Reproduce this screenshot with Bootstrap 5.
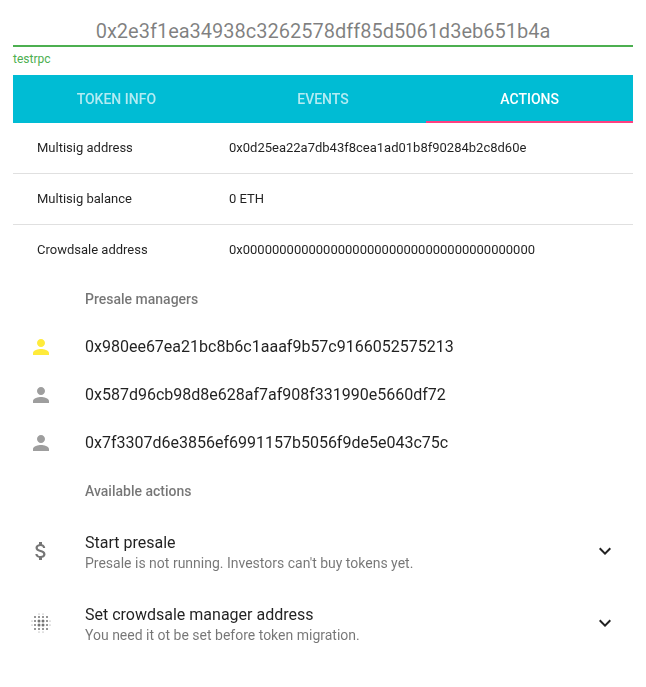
<!DOCTYPE html>
<html lang="en">
<head>
<meta charset="utf-8">
<meta name="viewport" content="width=device-width, initial-scale=1">
<title>Token contract</title>
<link href="https://cdn.jsdelivr.net/npm/bootstrap@5.3.0/dist/css/bootstrap.min.css" rel="stylesheet">
<style>
body{font-family:Roboto,"Liberation Sans",sans-serif;color:rgba(0,0,0,.87);font-size:16px;line-height:16px;-webkit-font-smoothing:antialiased}
.page{padding:13px 13px 0}
.address-input{height:34px;border:0;border-bottom:2px solid #4caf50;font-size:20px;line-height:24px;color:rgba(0,0,0,.5);padding:4px 0 0;background:transparent;border-radius:0}
.address-input:focus{box-shadow:none;border-color:#4caf50}
.network{font-size:12px;line-height:12px;color:#4caf50;margin-top:6px;height:22px}
.panel{will-change:transform}
.tabs{background:#00bcd4;height:48px}
.tabs .nav-link{height:48px;border-radius:0;font-size:14px;font-weight:500;line-height:48px;padding:0;color:rgba(255,255,255,.7)}
.tabs .nav-link.active{color:#fff;box-shadow:inset 0 -2px #ff4081}
.detail{font-size:13px;height:51px;border-bottom:1px solid #e0e0e0;padding:0 24px}
.detail:last-child{border-bottom:0;height:50px}
.detail-name{width:192px}
.subheader{font-size:14px;font-weight:500;line-height:48px;height:48px;color:rgba(0,0,0,.54);padding-left:72px}
.manager{height:48px;padding:0 16px}
.action{height:72px;padding:0 16px}
.action-text{padding-top:4px}
.icon-cell{width:56px}
.note{font-size:14px;line-height:16px;color:rgba(0,0,0,.54);margin-top:4px}
svg{display:block;width:24px;height:24px}
.owner{fill:#ffeb3b}.other{fill:#9e9e9e}.action-icon{fill:#757575}.toggle{fill:rgba(0,0,0,.87)}
</style>
<script src="https://cdn.jsdelivr.net/npm/bootstrap@5.3.0/dist/js/bootstrap.bundle.min.js"></script>
</head>
<body>
<svg class="d-none"><symbol id="person" viewBox="0 0 24 24"><path d="M12 12c2.21 0 4-1.79 4-4s-1.79-4-4-4-4 1.79-4 4 1.79 4 4 4zm0 2c-2.67 0-8 1.34-8 4v2h16v-2c0-2.66-5.33-4-8-4z"/></symbol><symbol id="expand" viewBox="0 0 24 24"><path d="M16.59 8.59L12 13.17 7.41 8.59 6 10l6 6 6-6z"/></symbol></svg>
<main class="page">
<input class="form-control address-input text-center" type="text" aria-label="Address" value="0x2e3f1ea34938c3262578dff85d5061d3eb651b4a">
<div class="network">testrpc</div>
<nav class="tabs panel nav nav-fill nav-justified">
<a class="nav-link" href="#">TOKEN INFO</a><a class="nav-link" href="#">EVENTS</a><a class="nav-link active" href="#">ACTIONS</a>
</nav>
<section class="panel">
<div class="detail d-flex align-items-center"><div class="detail-name">Multisig address</div><div>0x0d25ea22a7db43f8cea1ad01b8f90284b2c8d60e</div></div>
<div class="detail d-flex align-items-center"><div class="detail-name">Multisig balance</div><div>0 ETH</div></div>
<div class="detail d-flex align-items-center"><div class="detail-name">Crowdsale address</div><div>0x0000000000000000000000000000000000000000</div></div>
</section>
<section class="panel">
<div class="subheader">Presale managers</div>
<div class="manager d-flex align-items-center"><div class="icon-cell"><svg class="owner"><use href="#person"/></svg></div><div>0x980ee67ea21bc8b6c1aaaf9b57c9166052575213</div></div>
<div class="manager d-flex align-items-center"><div class="icon-cell"><svg class="other"><use href="#person"/></svg></div><div>0x587d96cb98d8e628af7af908f331990e5660df72</div></div>
<div class="manager d-flex align-items-center"><div class="icon-cell"><svg class="other"><use href="#person"/></svg></div><div>0x7f3307d6e3856ef6991157b5056f9de5e043c75c</div></div>
</section>
<section class="panel">
<div class="subheader">Available actions</div>
<div class="action d-flex align-items-center"><div class="icon-cell"><svg class="action-icon" viewBox="0 0 24 24"><path d="M11.8 10.9c-2.27-.59-3-1.2-3-2.15 0-1.09 1.01-1.85 2.7-1.85 1.78 0 2.44.85 2.5 2.1h2.21c-.07-1.72-1.12-3.3-3.21-3.81V3h-3v2.16c-1.94.42-3.5 1.68-3.5 3.61 0 2.31 1.91 3.46 4.7 4.13 2.5.6 3 1.48 3 2.41 0 .69-.49 1.79-2.7 1.79-2.06 0-2.87-.92-2.98-2.1h-2.2c.12 2.19 1.76 3.42 3.68 3.83V21h3v-2.15c1.95-.37 3.5-1.5 3.5-3.55 0-2.84-2.43-3.81-4.7-4.4z"/></svg></div><div class="action-text flex-grow-1"><div>Start presale</div><div class="note">Presale is not running. Investors can't buy tokens yet.</div></div><svg class="toggle"><use href="#expand"/></svg></div>
<div class="action d-flex align-items-center"><div class="icon-cell"><svg class="action-icon" viewBox="0 0 24 24"><g><circle cx="10" cy="10" r="1.5"/><circle cx="14" cy="10" r="1.5"/><circle cx="10" cy="14" r="1.5"/><circle cx="14" cy="14" r="1.5"/><circle cx="6" cy="6" r="1"/><circle cx="10" cy="6" r="1"/><circle cx="14" cy="6" r="1"/><circle cx="18" cy="6" r="1"/><circle cx="6" cy="10" r="1"/><circle cx="18" cy="10" r="1"/><circle cx="6" cy="14" r="1"/><circle cx="18" cy="14" r="1"/><circle cx="6" cy="18" r="1"/><circle cx="10" cy="18" r="1"/><circle cx="14" cy="18" r="1"/><circle cx="18" cy="18" r="1"/><circle cx="10" cy="3" r=".5"/><circle cx="14" cy="3" r=".5"/><circle cx="10" cy="21" r=".5"/><circle cx="14" cy="21" r=".5"/><circle cx="3" cy="10" r=".5"/><circle cx="3" cy="14" r=".5"/><circle cx="21" cy="10" r=".5"/><circle cx="21" cy="14" r=".5"/></g></svg></div><div class="action-text flex-grow-1"><div>Set crowdsale manager address</div><div class="note">You need it ot be set before token migration.</div></div><svg class="toggle"><use href="#expand"/></svg></div>
</section>
</main>
</body>
</html>
